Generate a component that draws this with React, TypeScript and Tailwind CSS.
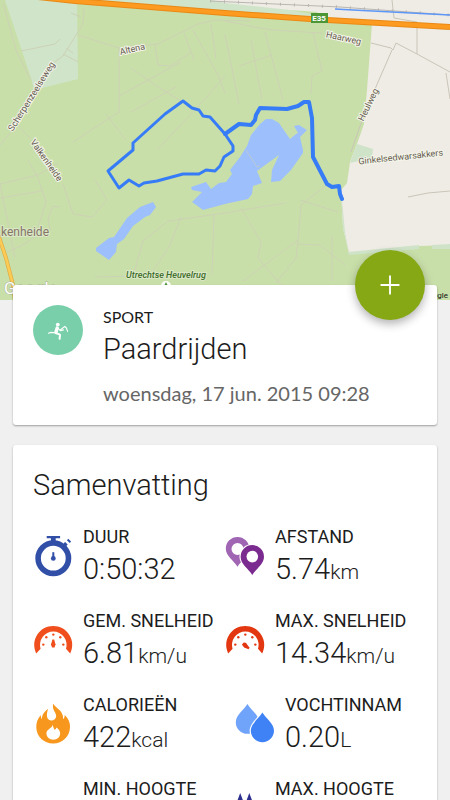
import React from "react";
import { Plus } from "lucide-react";

type Stat = {
  label: string;
  value: string;
  unit?: string;
  icon: React.ReactNode;
  indent?: boolean;
};

function Icon({ children }: { children: React.ReactNode }) {
  return (
    <svg
      viewBox="0 0 40 40"
      className="mt-2.5 h-10 w-10 shrink-0 overflow-visible"
      aria-hidden="true"
    >
      {children}
    </svg>
  );
}

function StopwatchIcon() {
  return (
    <Icon>
      <circle cx="20.3" cy="23.2" r="15.2" fill="none" stroke="#324fa8" strokeWidth="5.6" />
      <path d="M13.7 1h13.4v2.2h-4.4v4h-4.8v-4h-4.2z" fill="#324fa8" />
      <path d="M30.3 9.2l3 2.8M31.4 7.6l2.6 2.6M34.6 4.6l2.8 2.6" stroke="#324fa8" strokeWidth="2" />
      <path d="M20.3 17.2v6" stroke="#324fa8" strokeWidth="2" />
      <circle cx="20.3" cy="23.4" r="2.4" fill="#324fa8" />
    </Icon>
  );
}

function PinsIcon() {
  return (
    <Icon>
      <path
        fillRule="evenodd"
        d="M12.5 31.8C9 26 .8 21 .8 13.6a11.7 11.7 0 0 1 23.4 0C24.2 21 16 26 12.5 31.8zM12.5 8a6 6 0 1 0 0 12 6 6 0 0 0 0-12z"
        fill="#a066b3"
      />
      <path
        d="M27.3 40C23.8 34.2 15.6 29.2 15.6 21.8a11.7 11.7 0 0 1 23.4 0C39 29.2 30.8 34.2 27.3 40z"
        fill="#7b2a8f"
        stroke="#fff"
        strokeWidth="2.4"
        paintOrder="stroke"
      />
      <circle cx="27.3" cy="21.6" r="5.8" fill="#fff" />
    </Icon>
  );
}

function GaugeIcon({ color, fast }: { color: string; fast?: boolean }) {
  return (
    <Icon>
      <path
        d="M3.2 34.4A19 19 0 1 1 37.2 34.4L33 29.8A13.3 13.3 0 1 0 7.6 29.8z"
        fill={color}
      />
      <g fill={color}>
        <circle cx="10.3" cy="25.6" r="1.2" />
        <circle cx="13.3" cy="18.2" r="1.2" />
        <circle cx="20.3" cy="15.6" r="1.2" />
        <circle cx="27.3" cy="18.2" r="1.2" />
        <circle cx="30.3" cy="25.6" r="1.2" />
        <path
          d="M19.4 20.6h1.8l1.2 4.6-.8 3.2h-2.6l-.8-3.2z"
          transform={fast ? "rotate(128 20 26)" : undefined}
        />
        <circle cx={fast ? 19.6 : 20.3} cy="25.6" r="2.1" />
      </g>
    </Icon>
  );
}

function FlameIcon() {
  return (
    <Icon>
      <path
        d="M20.2.8C23 5 27.6 6.8 29.4 11.4c.7 1.8.8 3 .6 4.8 1.2-.6 1.6-2.6 1.8-4.2 4 4 5.4 8 5.2 12.2C36.6 33.6 29.6 40.4 20.2 40.4S3.6 33.6 3.3 24.4c-.1-4.4 1-8.6 4.6-12.4-.2 1.6.2 3 1 4.2 0-4 1.8-6.8 6.2-10.4-.8 3-1.4 5-1.1 7.6.4 2.6 2.6 4.2 5 4 3-.2 4.6-2.8 4-5.4C22.4 8.6 18.8 6.4 20.2.8z"
        fill="#f7971d"
      />
      <path
        d="M20 21.6c-.4 2 .8 3.2 1.2 5 1.4-.2 2-1 2.2-2.2 2.4 1.6 3.8 3.8 3.8 6.2a6.9 6.1 0 0 1-13.8 0c0-4.4 5.2-4.6 6.6-9z"
        fill="#fff"
      />
    </Icon>
  );
}

function DropsIcon() {
  return (
    <Icon>
      <path
        d="M12.4 1C15.6 6.6 24 12 24 19.2a11.6 11.6 0 0 1-23.2 0C.8 12 9.2 6.6 12.4 1z"
        fill="#70a3fa"
      />
      <path
        d="M27.4 9.6C30.6 15.2 39 20.6 39 27.6a11.6 11.6 0 0 1-23.2 0C15.8 20.6 24.2 15.2 27.4 9.6z"
        fill="#3f82f6"
        stroke="#fff"
        strokeWidth="2.4"
        paintOrder="stroke"
      />
    </Icon>
  );
}

function ValleyIcon() {
  return (
    <Icon>
      <path d="M12 16h6v14h4l-7 9-7-9h4zM24 16h6v14h4l-7 9-7-9h4z" fill="#2f318f" />
    </Icon>
  );
}

function PeakIcon() {
  return (
    <Icon>
      <path d="M15.2 6l3 8v22h-6V14zM24.3 6l3 8v22h-6V14z" fill="#2f318f" />
    </Icon>
  );
}

const stats: Stat[] = [
  { label: "DUUR", value: "0:50:32", icon: <StopwatchIcon /> },
  { label: "AFSTAND", value: "5.74", unit: "km", icon: <PinsIcon /> },
  { label: "GEM. SNELHEID", value: "6.81", unit: "km/u", icon: <GaugeIcon color="#f04e1c" /> },
  { label: "MAX. SNELHEID", value: "14.34", unit: "km/u", icon: <GaugeIcon color="#e23711" fast /> },
  { label: "CALORIEËN", value: "422", unit: "kcal", icon: <FlameIcon /> },
  { label: "VOCHTINNAM", value: "0.20", unit: "L", icon: <DropsIcon />, indent: true },
  { label: "MIN. HOOGTE", value: "12", unit: "m", icon: <ValleyIcon /> },
  { label: "MAX. HOOGTE", value: "48", unit: "m", icon: <PeakIcon /> },
];

function RouteMap() {
  return (
    <svg
      viewBox="0 0 450 300"
      preserveAspectRatio="xMidYMid slice"
      className="block h-[300px] w-full bg-[#c9dfa9] font-['Roboto',sans-serif]"
      role="img"
      aria-label="Kaart met de gereden route"
    >
      <rect width="450" height="300" fill="#c9dfa9" />

      {/* land cover */}
      <path d="M5 0H240L330 18 225 12 77 4 78 79 34 90 31 78z" fill="#d0e4ca" />
      <path d="M212 0H450V26L310 17 318 12 290 10 225 3z" fill="#efece5" />
      <path
        d="M372 24L450 29V245L419 246 349 253 343 228 341 190 347 183 350 162 357 144 364 124 367 90z"
        fill="#efece5"
      />
      <path d="M357 144l16 5-1 9-22 5zM348 252l71-7v4l-70 6zM432 245l18-1v5h-18zM341 190l2 38 6 26-4-22z" fill="#cfe3c9" />

      {/* footpaths */}
      <g fill="none" stroke="#cdd2b5" strokeWidth="1">
        <path d="M3 3l14 50 14 27" />
        <path d="M21 51l34-7 5-5M84 8l-1 16-20 32-11 8M71 13l10 4M66 48l7 5M63 54l15 8" />
        <path d="M78 35l41 13v64l-46 30M119 48l39-4 40-20 18-4 35 1" />
        <path d="M119 96l62-34M131 112l45-25M106 114l20 26M157 150l47-50 21-24" />
        <path d="M155 45l3 20 12 1 20-13M184 33l10 27M193 30l25 45 7 18M211 24l5 35M225 34l14 70" />
        <path d="M225 21l30 6 17 3 50 3M239 66l33-11M251 40l11 60M265 32l18 68M313 33l9 38-10 5-1 18" />
        <path d="M131 68l30 21 20 12M95 180l12 20-15 17-19-3-10-30" />
        <path d="M17 125l-17 20M17 125l14 14M0 184l38-9 20-12M0 198l42-7M28 160l10 18 8 24-11 35-14 9-14 6M0 184l15 73" />
        <path d="M50 230l-2-12 5-12 7 1M95 277l38-1 10-35 25-20 57-8 60-10M180 276l-45-1M181 217l-12 30-19 28M214 215l-2 60" />
        <path d="M241 208l20 34-3 16 30 35M243 281l55-41M298 244l22 1 25 20M332 235v46M298 240l3-35 28-22M298 240l-2 18-20 25M300 200l38 12" />
      </g>
      <g fill="none" stroke="#cac5b9" strokeWidth="1">
        <path d="M371 43l20 5 2 2 3-7 21 11 33 18M392 50l-27 62-14 40M417 54V22l-23-4-2-18M446 73l4 26M408 197l20-4 22-2" />
      </g>

      {/* railway and canal */}
      <path d="M210 1L340 7 450 15" fill="none" stroke="#b9b6b0" strokeWidth="1" />
      <path d="M210 1L340 7 450 15" fill="none" stroke="#b9b6b0" strokeWidth="3" strokeDasharray="1 13" />
      <path d="M335 9l18 1 97 5" fill="none" stroke="#5d97f7" strokeWidth="1.5" />

      {/* main roads */}
      <path d="M38-3l37 4 150 12 85 6 140 8" fill="none" stroke="#e98916" strokeWidth="6" />
      <path d="M38-3l37 4 150 12 85 6 140 8" fill="none" stroke="#fc9b20" strokeWidth="4" />
      <path d="M-2 234l8 24 7 27 2 15" fill="none" stroke="#dfae45" strokeWidth="4" />
      <path d="M-2 234l8 24 7 27 2 15" fill="none" stroke="#fccb55" strokeWidth="2.6" />

      {/* water */}
      <g fill="#9dc0fd">
        <path d="M153 202l3 5-6 8-5 2-12 9-9 13-7 5-1 8-7 8-13-9v-3l13-10 5-1 13-19 13-11z" />
        <path d="M247 146l4-11 9-11 6-5h6l7 4 11 16 6-5 2-1-4-7 5-1 8 5-7 7 3 13v3l-12 17-11 11-9 1 1-12 7-15-22 16 5 12-9 3-1 8-4 5-23 5-22 6-11-8 10-10-10-2-1-3 15-5 5 7 8-6 7-1 6-8-2-4 10-13z" />
      </g>
      <path d="M246 150l11 17 3-1" fill="none" stroke="#b9c8d2" strokeWidth="1" />

      {/* ridden track */}
      <g fill="none" stroke="#377cf7" strokeLinejoin="round" strokeLinecap="round">
        <path
          d="M225 134l-15-17-7-1-4-6-7-2-9-7-18 13-32 29v7l-25 21 11 17 10-8 10 6 5-3 13-2 26-7h16l7-4 9 1 5-5 4-9 9-6v-5z"
          strokeWidth="3"
        />
        <path
          d="M225 134l14-10 12 1 4-5 1-5 4-7 27 1 11-3 6-4h5l3 16 1 39 14 27 5 3 7-1 1 8 2 5"
          strokeWidth="4"
        />
      </g>

      {/* labels */}
      <rect x="311" y="13" width="17" height="10" fill="#4d9635" />
      <text x="319" y="21" textAnchor="middle" fontSize="8" fontWeight="700" fill="#fff">
        E35
      </text>
      <g fontSize="9" fill="#655b4f" stroke="#f4f5ea" strokeWidth="2" paintOrder="stroke" textAnchor="middle">
        <text transform="translate(133 52) rotate(-13)">Altena</text>
        <text transform="translate(343 41) rotate(12)">Haarweg</text>
        <text transform="translate(371 106) rotate(-64)">Heulweg</text>
        <text transform="translate(34 98) rotate(-58)">Scherpenzeelseweg</text>
        <text transform="translate(44 162) rotate(55)">Valkenheide</text>
        <text transform="translate(401 160) rotate(-6)">Ginkelsedwarsakkers</text>
      </g>
      <text x="49" y="236" textAnchor="end" fontSize="12" fill="#857567" stroke="#dbe8c7" strokeWidth="2" paintOrder="stroke">
        kenheide
      </text>
      <text x="166" y="278" textAnchor="middle" fontSize="9" fontWeight="500" fontStyle="italic" fill="#3c6b27" stroke="#dbe8c7" strokeWidth="2" paintOrder="stroke">
        Utrechtse Heuvelrug
      </text>
      <circle cx="166" cy="286" r="5" fill="#fff" />
      <path d="M166 282l2 4h-4z" fill="#4d9635" />
      <text x="4" y="294" fontSize="17" fill="#fff" stroke="#a9b498" strokeWidth="1" paintOrder="stroke">
        Google
      </text>
      <text x="448" y="298" textAnchor="end" fontSize="8" fill="#111">
        Google
      </text>
    </svg>
  );
}

function RiderIcon() {
  return (
    <svg viewBox="0 0 50 50" className="h-full w-full" aria-hidden="true">
      <circle cx="24.8" cy="19.6" r="1.9" fill="#fff" />
      <g fill="none" stroke="#fff" strokeLinecap="round" strokeLinejoin="round">
        <path d="M24.2 23l-1.4 4.4" strokeWidth="3.4" />
        <path d="M22.8 28l4.2 1.6-.4 4.2" strokeWidth="2" />
        <path d="M25 23.4l2.4 2.2 3-.8" strokeWidth="1.2" />
        <path d="M27.6 24.8l4.2-3.4 1.6 1.6 1.2 3.4M15.4 28.2l2-.8 3.4.2" strokeWidth="1.1" />
      </g>
    </svg>
  );
}

function StatItem({ stat }: { stat: Stat }) {
  return (
    <div className={stat.indent ? "flex gap-2.5 pl-2.5" : "flex gap-2.5"}>
      {stat.icon}
      <dl className="whitespace-nowrap">
        <dt className="text-[18px] leading-6">{stat.label}</dt>
        <dd className="text-[29px] leading-10 font-light">
          {stat.value}
          {stat.unit && <span className="text-[21px] leading-none">{stat.unit}</span>}
        </dd>
      </dl>
    </div>
  );
}

function App() {
  return (
    <main className="h-screen overflow-y-auto bg-[#f0f0f0] font-['Roboto',sans-serif] text-[#1c1c1c] [scrollbar-width:none]">
      <RouteMap />

      <section className="relative mx-[13px] -mt-[15px] flex gap-5 rounded-[3px] bg-white p-5 shadow-[0_1px_2px_rgba(0,0,0,0.35)]">
        <div className="h-[50px] w-[50px] shrink-0 rounded-full bg-[#79cfa9]">
          <RiderIcon />
        </div>
        <div>
          <p className="font-['Lato',sans-serif] text-[16px] leading-6">SPORT</p>
          <h1 className="text-[29px] leading-10 font-light">Paardrijden</h1>
          <p className="mt-3 font-['Lato',sans-serif] text-[20px] leading-6 text-[#666]">
            woensdag, 17 jun. 2015 09:28
          </p>
        </div>
        <button
          type="button"
          aria-label="Toevoegen"
          className="absolute -top-[35px] right-3 flex h-[70px] w-[70px] items-center justify-center rounded-full bg-[#86a814] text-white shadow-[0_4px_10px_rgba(0,0,0,0.3)]"
        >
          <Plus size={30} strokeWidth={1.5} />
        </button>
      </section>

      <section className="mx-[13px] mt-5 rounded-[3px] bg-white p-5 shadow-[0_1px_2px_rgba(0,0,0,0.35)]">
        <h2 className="text-[29px] leading-10 font-light">Samenvatting</h2>
        <div className="mt-5 grid grid-cols-2 gap-y-5">
          {stats.map((stat) => (
            <StatItem key={stat.label} stat={stat} />
          ))}
        </div>
      </section>
    </main>
  );
}

export default App;
